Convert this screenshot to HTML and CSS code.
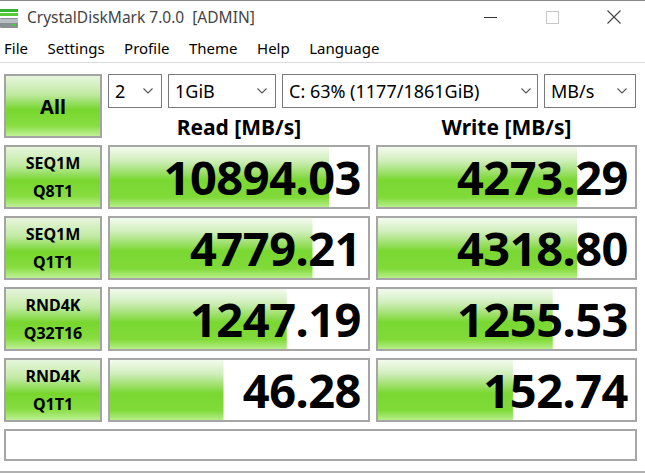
FILE: index.html
```html
<!DOCTYPE html>
<html lang="en">
<head>
  <meta charset="UTF-8" />
  <title>CrystalDiskMark 7.0.0 [ADMIN]</title>
  <link rel="stylesheet" href="styles.css">
</head>
<body>
  <div class="window">
    <div class="titlebar">
      <svg class="app-icon" width="20" height="24" viewBox="0 0 20 24">
        <rect x="0" y="4" width="18" height="3" fill="#2fb52f"/>
        <rect x="0" y="8" width="18" height="3" fill="#55cc3a"/>
        <rect x="0" y="13" width="18" height="10" rx="1" fill="#8a8f94"/>
        <rect x="0" y="14" width="18" height="4" fill="#b9bec2"/>
        <rect x="12" y="19" width="4" height="2" fill="#3fd03f"/>
      </svg>
      <span class="title">CrystalDiskMark 7.0.0&nbsp;&nbsp;[ADMIN]</span>
      <div class="win-controls">
        <div class="win-btn">
          <svg width="13" height="13" viewBox="0 0 13 13"><line x1="0" y1="6.5" x2="13" y2="6.5" stroke="#333" stroke-width="1"/></svg>
        </div>
        <div class="win-btn">
          <svg width="13" height="13" viewBox="0 0 13 13"><rect x="0.5" y="0.5" width="12" height="12" fill="none" stroke="#c8c8c8" stroke-width="1"/></svg>
        </div>
        <div class="win-btn">
          <svg width="14" height="14" viewBox="0 0 14 14"><path d="M0.5 0.5 L13.5 13.5 M13.5 0.5 L0.5 13.5" stroke="#444" stroke-width="1.1"/></svg>
        </div>
      </div>
    </div>

    <div class="menubar">
      <span>File</span>
      <span>Settings</span>
      <span>Profile</span>
      <span>Theme</span>
      <span>Help</span>
      <span>Language</span>
    </div>

    <div class="main">
      <div class="btn all">All</div>

      <div class="selects">
        <div class="select s-count"><span>2</span><svg class="chev" width="10" height="6" viewBox="0 0 10 6"><path d="M0.5 0.5 L5 5 L9.5 0.5" fill="none" stroke="#555" stroke-width="1.1"/></svg></div>
        <div class="select s-size"><span>1GiB</span><svg class="chev" width="10" height="6" viewBox="0 0 10 6"><path d="M0.5 0.5 L5 5 L9.5 0.5" fill="none" stroke="#555" stroke-width="1.1"/></svg></div>
        <div class="select s-drive"><span>C: 63% (1177/1861GiB)</span><svg class="chev" width="10" height="6" viewBox="0 0 10 6"><path d="M0.5 0.5 L5 5 L9.5 0.5" fill="none" stroke="#555" stroke-width="1.1"/></svg></div>
        <div class="select s-unit"><span>MB/s</span><svg class="chev" width="10" height="6" viewBox="0 0 10 6"><path d="M0.5 0.5 L5 5 L9.5 0.5" fill="none" stroke="#555" stroke-width="1.1"/></svg></div>
      </div>

      <div class="head">Read [MB/s]</div>
      <div class="head">Write [MB/s]</div>

      <div class="btn label">SEQ1M<br>Q8T1</div>
      <div class="cell" style="--w: 85%">10894.03</div>
      <div class="cell" style="--w: 77.5%">4273.29</div>

      <div class="btn label">SEQ1M<br>Q1T1</div>
      <div class="cell" style="--w: 78.5%">4779.21</div>
      <div class="cell" style="--w: 77.5%">4318.80</div>

      <div class="btn label">RND4K<br>Q32T16</div>
      <div class="cell" style="--w: 68.5%">1247.19</div>
      <div class="cell" style="--w: 68%">1255.53</div>

      <div class="btn label">RND4K<br>Q1T1</div>
      <div class="cell" style="--w: 44%">46.28</div>
      <div class="cell" style="--w: 52.5%">152.74</div>

      <div class="status"></div>
    </div>
  </div>
</body>
</html>
```

FILE: styles.css
```css
body {
  margin: 0;
  padding: 0;
  background: #fff;
  font-family: "Noto Sans", sans-serif;
  color: #000;
}

.window {
  width: 645px;
  height: 473px;
  box-sizing: border-box;
  border-top: 1px solid #8a8a8a;
  border-bottom: 2px solid #b0b0b0;
  background: #fff;
  overflow: hidden;
}

/* title bar */
.titlebar {
  height: 32px;
  display: flex;
  align-items: center;
}

.app-icon {
  margin-right: 7px;
}

.title {
  font-size: 15.5px;
  color: #444;
}

.win-controls {
  margin-left: auto;
  display: flex;
  height: 32px;
}

.win-btn {
  width: 62px;
  display: flex;
  align-items: center;
  justify-content: center;
}

/* menu */
.menubar {
  height: 29px;
  display: flex;
  align-items: center;
  padding-left: 4px;
  font-size: 15px;
  border-bottom: 1px solid #dcdcdc;
}

.menubar span {
  margin-right: 19.5px;
}

/* main grid */
.main {
  display: grid;
  grid-template-columns: 98px 262px 261px;
  grid-template-rows: 34px 23px repeat(4, 64px) 32px;
  column-gap: 6px;
  row-gap: 7px;
  padding: 11px 0 0 4px;
}

.btn {
  box-sizing: border-box;
  border: 2px solid #a4a4a4;
  background: linear-gradient(#e6f5dc 0%, #c2eaa4 30%, #8edc55 48%, #78d62e 56%, #86dd40 82%, #bff095 100%);
  display: flex;
  align-items: center;
  justify-content: center;
  text-align: center;
  font-weight: bold;
}

.btn.all {
  grid-row: 1 / 3;
  font-size: 20px;
}

.btn.label {
  font-size: 16px;
  line-height: 28px;
}

.selects {
  grid-column: 2 / 4;
  display: flex;
  gap: 6px;
}

.select {
  box-sizing: border-box;
  border: 1px solid #7a7a7a;
  background: #fff;
  display: flex;
  align-items: center;
  justify-content: space-between;
  padding: 0 8px 0 6px;
  font-size: 18px;
}

.s-count { width: 54px; }
.s-size { width: 108px; }
.s-drive { width: 256px; padding-right: 6px; }
.s-unit { width: 92px; }

.chev {
  flex-shrink: 0;
}

.head {
  font-size: 21px;
  font-weight: bold;
  text-align: center;
  line-height: 25px;
  align-self: end;
  margin-bottom: -2px;
}

.cell {
  box-sizing: border-box;
  border: 2px solid #a6a6a6;
  background-color: #fff;
  background-image: linear-gradient(#f3faee 0%, #d2efbe 22%, #9ee06c 42%, #7ad832 55%, #80da38 84%, #b6ee89 100%);
  background-repeat: no-repeat;
  background-size: var(--w) 100%;
  display: flex;
  align-items: center;
  justify-content: flex-end;
  padding-right: 7px;
  font-size: 47px;
  font-weight: bold;
  line-height: 1;
  letter-spacing: -0.5px;
}

.status {
  grid-column: 1 / 4;
  box-sizing: border-box;
  border: 2px solid #a6a6a6;
  background: #fff;
}
```
